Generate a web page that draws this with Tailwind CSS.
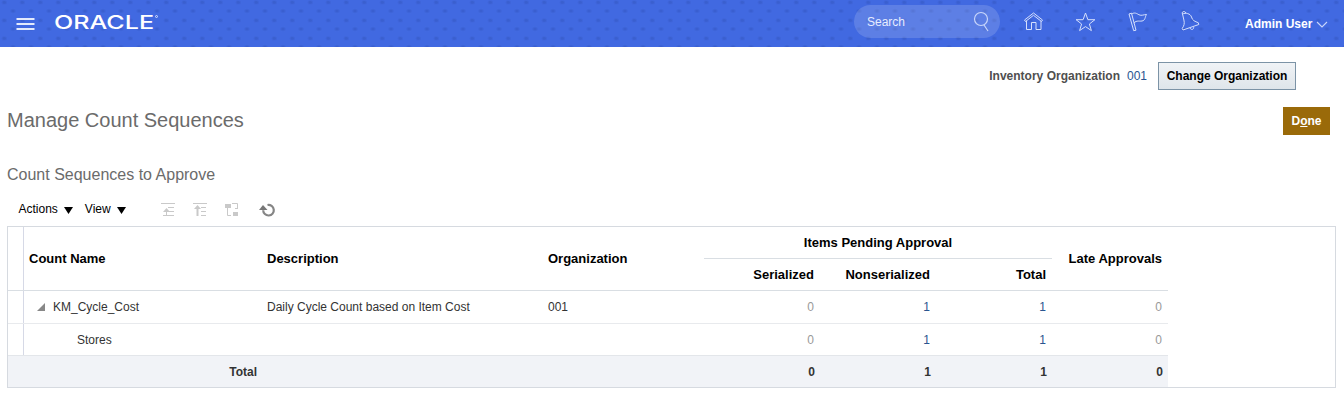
<!DOCTYPE html>
<html lang="en">
<head>
<meta charset="utf-8">
<title>Manage Count Sequences</title>
<script src="https://cdn.jsdelivr.net/npm/@tailwindcss/browser@4"></script>
</head>
<body class="h-[400px] w-[1344px] overflow-hidden bg-white font-['Liberation_Sans',Arial,sans-serif] text-xs text-[#333]">
<header class="relative flex h-[47px] items-start bg-[#4169e1] text-white">
  <svg class="absolute inset-0" width="1344" height="47" aria-hidden="true">
    <defs><pattern id="dots" width="18" height="18" patternUnits="userSpaceOnUse"><g fill="#3559c4"><ellipse cx="4.300" cy="2.400" rx="2.800" ry="2.200" fill-opacity=".25"/><ellipse cx="4.300" cy="2.400" rx="1.700" ry="1.300" fill-opacity=".45"/><ellipse cx="13" cy="11" rx="2.800" ry="2.200" fill-opacity=".25"/><ellipse cx="13" cy="11" rx="1.700" ry="1.300" fill-opacity=".45"/></g></pattern></defs>
    <rect width="1344" height="47" fill="url(#dots)"/>
  </svg>
  <svg class="relative mt-[17px] ml-4" width="20" height="14" stroke="#e3eafc" stroke-width="2"><path d="M.5 2h18M.5 7h18M.5 12h18"/></svg>
  <svg class="relative ml-[17px]" width="112" height="40" fill="#fff"><text x="1" y="28.500" textLength="100" lengthAdjust="spacingAndGlyphs" font-family="Inter" font-weight="500" font-size="18.500">ORACLE</text><circle cx="103.500" cy="16.500" r="1" fill="none" stroke="#fff" stroke-width=".7"/></svg>
  <div class="relative mt-[5px] ml-[689px] flex h-[33px] w-[146px] justify-between rounded-full bg-white/15 pr-[10px] pl-[13px]">
    <span class="mt-[9px] leading-4 text-[#e6ecff]">Search</span>
    <svg class="mt-[6px]" width="18" height="22" fill="none" stroke="#c9d6fa" stroke-width="1.2"><circle cx="9" cy="8" r="6.500"/><path d="M12 14l4 6"/></svg>
  </div>
  <svg class="relative ml-[23px] mt-3" width="22" height="20" fill="none" stroke="#d5dffc" stroke-width="1"><path d="M1.500 8L10.500 1l9 7-1 1.500-8-6.200-8 6.200zM3.500 9v8.500h5v-7h4.500v7h5V9"/></svg>
  <svg class="relative ml-[30px] mt-3" width="22" height="21" fill="none" stroke="#d5dffc" stroke-width="1"><path d="M10.500 1l2.400 6.700h7l-5.500 4.300 2 6.600-5.900-4-5.900 4 2-6.600L1.100 7.700h7z"/></svg>
  <svg class="relative ml-[31px] mt-[11px]" width="22" height="22" fill="none" stroke="#d5dffc" stroke-width="1"><path d="M1 3l2.500-.8 4.500 17-2.300.5zM3.700 3c3-2 5-.5 7.300.8 2.500 1.300 5-.3 7.500-.3-1.500 2-1 6-4.500 6.500-3 .5-5-1-8.200 2"/></svg>
  <svg class="relative ml-[30px] mt-[10px]" width="22" height="22" fill="none" stroke="#d5dffc" stroke-width="1"><path d="M2.500 4c3-1.500 8-.5 9 3 .8 3.500 3.500 4.500 6.800 5.700l.5 1.800L3 20l-.8-1.500c2-3 2.500-5 1.700-8.500-.5-2-1-4-1.400-6zM2.500 4C1 1.500 5 .5 6 3M10 18c1 2.500 4.500 1.500 3.500-1.200"/></svg>
  <span class="relative ml-[43px] mt-4 font-bold leading-4">Admin User</span>
  <svg class="relative ml-1 mt-5" width="12" height="9" fill="none" stroke="#c9d6fa" stroke-width="1.1"><path d="M1 2l5 5 5-5"/></svg>
</header>

<div class="mt-[15px] flex h-7 items-center justify-end pr-12">
  <span class="font-bold text-[#4f4f4f]">Inventory Organization</span>
  <span class="ml-[7px] text-[#2a5590]">001</span>
  <button class="ml-[11px] h-7 w-[138px] border border-[#7c93a6] bg-linear-to-b from-[#f0f3f6] to-[#dfe5ea] text-xs font-bold text-black">Change Organization</button>
</div>
<div class="mt-[17px] flex h-7 items-center justify-between pr-[14px] pl-[7px]">
  <h1 class="-mt-[2px] text-[20px] leading-7 text-[#6b6b6b]">Manage Count Sequences</h1>
  <button class="h-7 w-[47px] bg-[#9a6a09] text-xs font-bold text-white">D<span class="underline">o</span>ne</button>
</div>
<h2 class="mt-[30px] pl-[7px] text-base leading-5 text-[#6b6b6b]">Count Sequences to Approve</h2>

<div class="mt-[15px] flex h-[18px] items-center pl-[18.500px] text-black">
  <span>Actions</span>
  <svg class="mt-[3px] ml-[6px]" width="9" height="7"><path d="M0 0h9L4.500 7z"/></svg>
  <span class="ml-3">View</span>
  <svg class="mt-[3px] ml-[6px]" width="9" height="7"><path d="M0 0h9L4.500 7z"/></svg>
  <svg class="mt-[2px] ml-[34px]" width="15" height="16" stroke="#c9c9c9"><path d="M1 1.500h14M8 5.500h6M9 9.500h5M3 13.500h11M6.500 9v4" /><path d="M3 10l3.500-4L10 10z" fill="#c9c9c9" stroke="none"/></svg>
  <svg class="mt-[2px] ml-[17px]" width="15" height="16" stroke="#c9c9c9"><path d="M1 1.500h14M9 5.500h5M9 9.500h5M9 13.500h5"/><path d="M5.500 5v9" stroke-width="2"/><path d="M2 7l3.500-4L9 7z" fill="#c9c9c9" stroke="none"/></svg>
  <svg class="mt-[2px] ml-[17px]" width="15" height="16" fill="none" stroke="#c9c9c9"><path d="M1 2h6v4H1zM9 10h5v4H9z" fill="#c9c9c9" stroke="none"/><path d="M3.500 6v7.500H7M8 1.500h5.500V7M11 6.500h3M9 10.500h5"/></svg>
  <svg class="mt-[2px] ml-[20px]" width="17" height="16" fill="none"><path d="M8.500 3a5.300 5.300 0 1 1-4.300 5.200" stroke="#858585" stroke-width="2.200"/><path d="M0 8L4 3l4.500 5z" fill="#777"/></svg>
</div>

<main class="mr-2 ml-[7px] mt-2 h-[162px] border border-[#d6dae0]">
  <div class="w-[1160px]">
    <div class="flex h-16 border-b border-[#d9dee3] text-[13px] font-bold text-black">
      <div class="w-4 border-r border-[#d6d9e6]"></div>
      <div class="flex w-[238px] items-center pl-[5px]">Count Name</div>
      <div class="flex w-[281px] items-center pl-[5px]">Description</div>
      <div class="flex w-[161px] items-center pl-[5px]">Organization</div>
      <div class="w-[348px]">
        <div class="flex h-8 items-center justify-center border-b border-[#d9dee3]">Items Pending Approval</div>
        <div class="flex h-[31px] items-center text-right">
          <div class="w-[116px] pr-[6px]">Serialized</div><div class="w-[116px] pr-[6px]">Nonserialized</div><div class="w-[116px] pr-[6px]">Total</div>
        </div>
      </div>
      <div class="flex w-[116px] items-center justify-end pr-[6px]">Late Approvals</div>
    </div>
    <div class="flex h-[33px] border-b border-[#e8eaed] leading-8">
      <div class="w-4 border-r border-[#d6d9e6]"></div>
      <div class="flex w-[238px] items-center pl-[13px]"><svg class="mr-2" width="8" height="8"><path d="M8 0v8H0z" fill="#888"/></svg>KM_Cycle_Cost</div>
      <div class="w-[281px] pl-[5px]">Daily Cycle Count based on Item Cost</div>
      <div class="w-[161px] pl-[5px]">001</div>
      <div class="w-[116px] pr-[6px] text-right text-[#999]">0</div>
      <div class="w-[116px] pr-[6px] text-right text-[#2a5590]">1</div>
      <div class="w-[116px] pr-[6px] text-right text-[#2a5590]">1</div>
      <div class="w-[116px] pr-[6px] text-right text-[#999]">0</div>
    </div>
    <div class="flex h-8 border-b border-[#e3e6ea] leading-8">
      <div class="w-4 border-r border-[#d6d9e6]"></div>
      <div class="w-[680px] pl-[53px]">Stores</div>
      <div class="w-[116px] pr-[6px] text-right text-[#999]">0</div>
      <div class="w-[116px] pr-[6px] text-right text-[#2a5590]">1</div>
      <div class="w-[116px] pr-[6px] text-right text-[#2a5590]">1</div>
      <div class="w-[116px] pr-[6px] text-right text-[#999]">0</div>
    </div>
    <div class="flex h-[31px] bg-[#f1f3f7] text-right font-bold leading-[33px]">
      <div class="w-[249px]">Total</div><div class="w-[447px]"></div>
      <div class="w-[116px] pr-[5px]">0</div>
      <div class="w-[116px] pr-[5px]">1</div>
      <div class="w-[116px] pr-[5px]">1</div>
      <div class="w-[116px] pr-[5px]">0</div>
    </div>
  </div>
</main>
</body>
</html>
